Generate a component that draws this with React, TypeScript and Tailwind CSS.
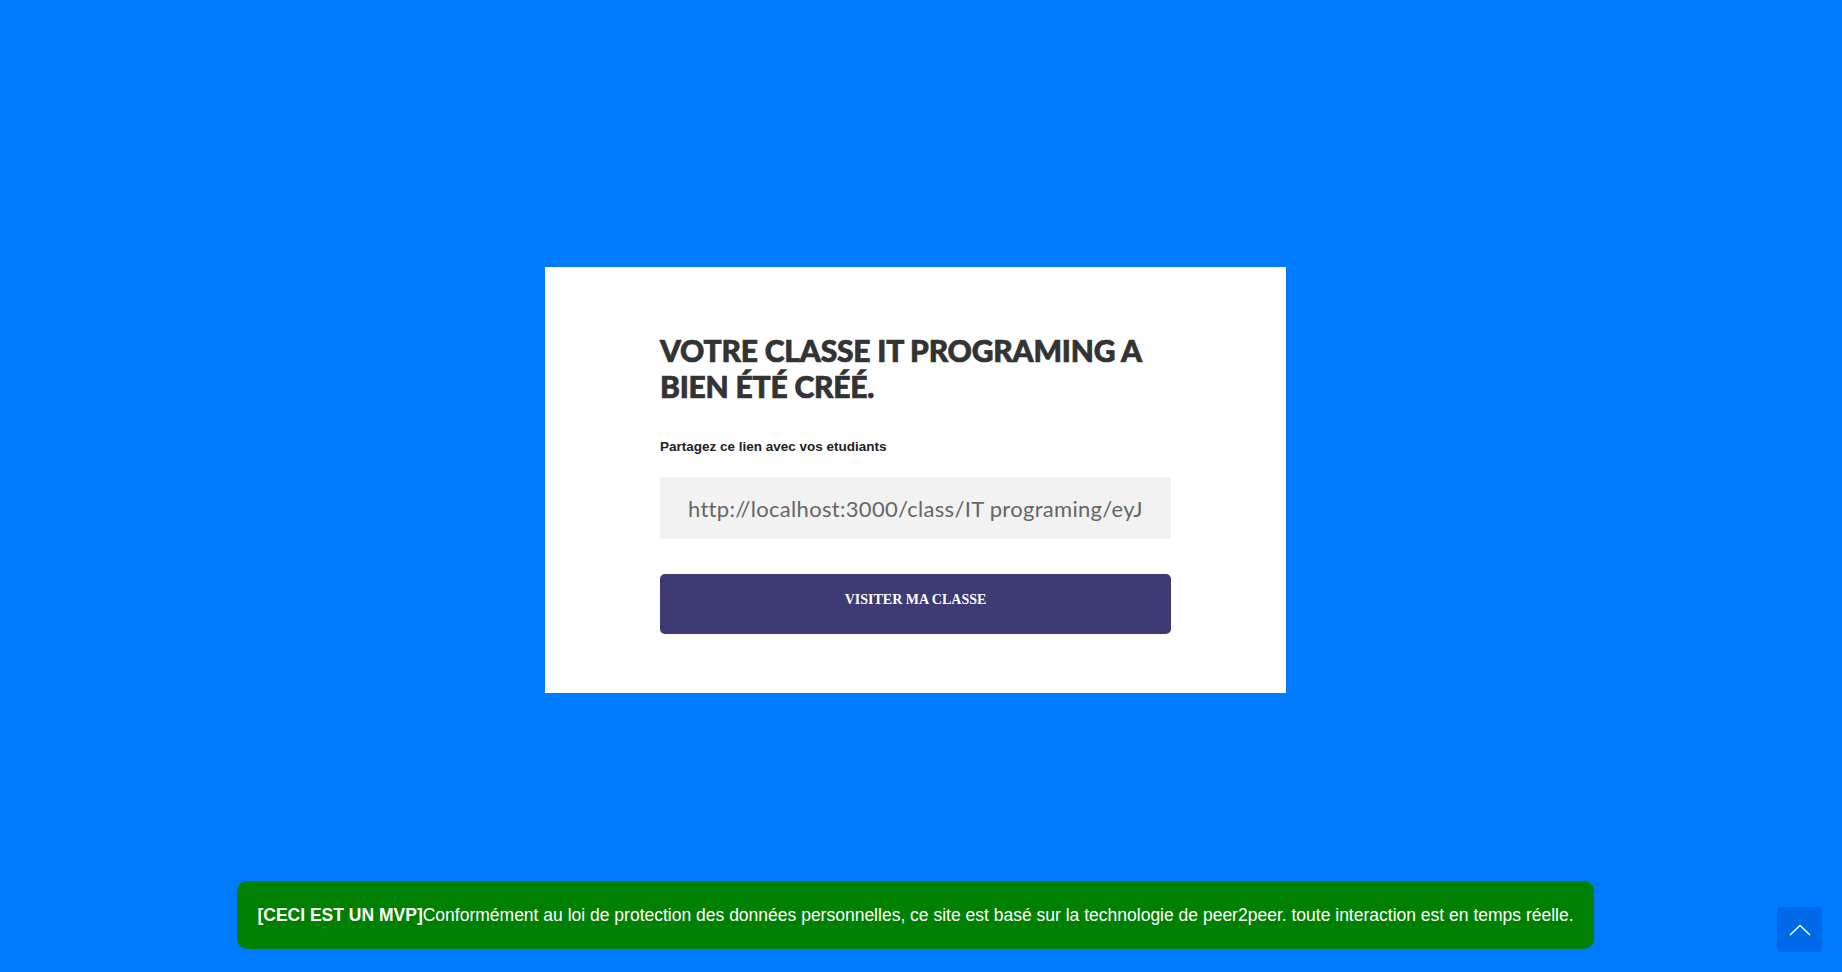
import React from 'react';

const LINK = "http://localhost:3000/class/IT programing/eyJhbGciOiJIUzI1NiIsInR5cCI6IkpXVCJ9";

const ScrollTop = () => (
  <button className="absolute right-[20px] bottom-[20px] w-[45px] h-[45px] rounded-[4px] bg-[#0069e8] flex items-center justify-center">
    <svg width="22" height="12" viewBox="0 0 22 12" fill="none" stroke="white" strokeWidth="1.4">
      <path d="M1 11 L11 1.5 L21 11" />
    </svg>
  </button>
);

export default function App() {
  return (
    <div className="relative w-full h-[972px] bg-[#007bff] overflow-hidden">
      {/* main card */}
      <div className="h-full flex items-center justify-center pr-[11px] pb-[12px]">
        <div className="w-[741px] bg-white px-[115px] pt-[65px] pb-[59px]">
          <h1
            className="text-[30px] leading-[36px] font-black uppercase text-[#333] tracking-[-0.2px] [-webkit-text-stroke:0.7px_#333]"
            style={{ fontFamily: 'Lato, "Open Sans", sans-serif' }}
          >
            Votre classe IT programing a bien été créé.
          </h1>
          <p
            className="mt-[33px] text-[13.5px] leading-[20px] font-bold text-[#222]"
            style={{ fontFamily: '"Liberation Sans", Arial, sans-serif' }}
          >
            Partagez ce lien avec vos etudiants
          </p>
          <input
            readOnly
            value={LINK}
            className="mt-[20px] block w-full h-[62px] bg-[#f2f2f2] rounded-[2px] px-[28px] text-[22px] tracking-[0.3px] text-[#666] outline-none"
            style={{ fontFamily: 'Lato, "Open Sans", sans-serif' }}
          />
          <button
            className="mt-[35px] w-full h-[60px] rounded-[5px] bg-[#3d3a74] text-white text-[14px] font-bold uppercase pb-[10px]"
            style={{ fontFamily: '"Liberation Serif", "Times New Roman", serif' }}
          >
            Visiter ma classe
          </button>
        </div>
      </div>

      {/* MVP banner */}
      <div className="absolute left-0 right-0 bottom-[23px] flex justify-center pr-[11px]">
        <div
          className="bg-[#008000] rounded-[10px] px-[20px] h-[68px] flex items-center text-white text-[17.5px] whitespace-nowrap"
          style={{ fontFamily: '"Liberation Sans", Arial, sans-serif' }}
        >
          <span className="font-bold">[CECI EST UN MVP]</span>
          <span>Conformément au loi de protection des données personnelles, ce site est basé sur la technologie de peer2peer. toute interaction est en temps réelle.</span>
        </div>
      </div>

      <ScrollTop />
    </div>
  );
}
